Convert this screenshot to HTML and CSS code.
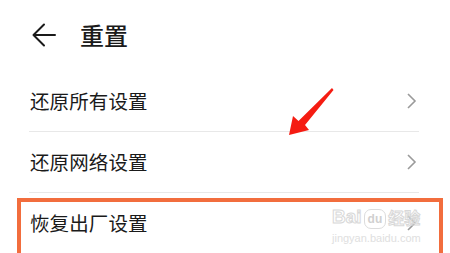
FILE: index.html
```html
<!DOCTYPE html>
<html lang="zh">
<head>
<meta charset="utf-8">
<link rel="stylesheet" href="styles.css">
</head>
<body>
<div class="page">
  <header class="header">
    <svg class="back" width="24" height="24" viewBox="0 0 24 24"><path d="M12 1.5 L1.5 12 L12 22.5 M1.5 12 H23" fill="none" stroke="#1a1a1a" stroke-width="2" stroke-linecap="round" stroke-linejoin="round"/></svg>
    <h1 class="title">重置</h1>
  </header>
  <ul class="list">
    <li class="row"><span class="label">还原所有设置</span><svg class="chev" width="12" height="16" viewBox="0 0 12 16"><path d="M2 1 L9 8 L2 15" fill="none" stroke="#9a9a9a" stroke-width="1.6"/></svg></li>
    <li class="row"><span class="label">还原网络设置</span><svg class="chev" width="12" height="16" viewBox="0 0 12 16"><path d="M2 1 L9 8 L2 15" fill="none" stroke="#9a9a9a" stroke-width="1.6"/></svg></li>
    <li class="row"><span class="label">恢复出厂设置</span><svg class="chev" width="12" height="16" viewBox="0 0 12 16"><path d="M2 1 L9 8 L2 15" fill="none" stroke="#9a9a9a" stroke-width="1.6"/></svg></li>
  </ul>
  <div class="highlight"></div>
  <svg class="pointer" width="60" height="60" viewBox="0 0 60 60"><polygon points="52,8 53.5,10 25,45 29,50 9,55 13,36 18.5,41" fill="#f51c12"/></svg>
  <div class="watermark">
    <div class="wm-top"><span class="wm-bai">Bai</span><span class="wm-paw">du</span><span class="wm-jy">经验</span></div>
    <div class="wm-url">jingyan.baidu.com</div>
  </div>
</div>
</body>
</html>
```
FILE: styles.css
```css
html, body {
  margin: 0;
  padding: 0;
  background: #ffffff;
}
.page {
  position: relative;
  width: 450px;
  height: 253px;
  overflow: hidden;
  font-family: "Noto Sans CJK SC", "Noto Sans", sans-serif;
  color: #1a1a1a;
}
.header {
  display: flex;
  align-items: center;
  height: 71px;
  padding-left: 32px;
  box-sizing: border-box;
  padding-bottom: 1px;
}
.back {
  display: block;
  margin-top: -1px;
}
.title {
  margin: 0 0 0 24px;
  font-size: 24px;
  font-weight: 500;
  line-height: 1;
}
.list {
  list-style: none;
  margin: 0 31px 0 29px;
  padding: 0;
}
.row {
  display: flex;
  align-items: center;
  justify-content: space-between;
  height: 60px;
  border-bottom: 1px solid #e8e8e8;
  padding-left: 1px;
  padding-right: 0;
}
.row:last-child {
  border-bottom-color: #f8d8c8;
}
.label {
  font-size: 19.5px;
  line-height: 1;
  letter-spacing: 0.1px;
}
.chev {
  display: block;
  margin-right: 1px;
}
.highlight {
  position: absolute;
  left: 17px;
  top: 198px;
  width: 418px;
  height: 70px;
  border: 4px solid #f26d3d;
}
.pointer {
  position: absolute;
  left: 280px;
  top: 80px;
}
.watermark {
  position: absolute;
  left: 332px;
  top: 205px;
  width: 96px;
  color: #e4e4e4;
  font-family: "Liberation Sans", sans-serif;
}
.wm-top {
  display: flex;
  align-items: flex-end;
  font-size: 19px;
  font-weight: 700;
  line-height: 24px;
}
.wm-bai {
  color: transparent;
  -webkit-text-stroke: 1px #d8d8d8;
}
.wm-paw {
  font-size: 12px;
  line-height: 16px;
  margin: 0 2px;
  padding: 1px 3px;
  border: 1.5px solid #dcdcdc;
  border-radius: 7px;
  color: #d0d0d0;
}
.wm-jy {
  font-family: "Noto Sans CJK SC", sans-serif;
  font-size: 16px;
  color: transparent;
  -webkit-text-stroke: 1px #d8d8d8;
}
.wm-url {
  font-size: 11px;
  line-height: 14px;
  color: #e0e0e0;
  margin-top: 2px;
}
```
